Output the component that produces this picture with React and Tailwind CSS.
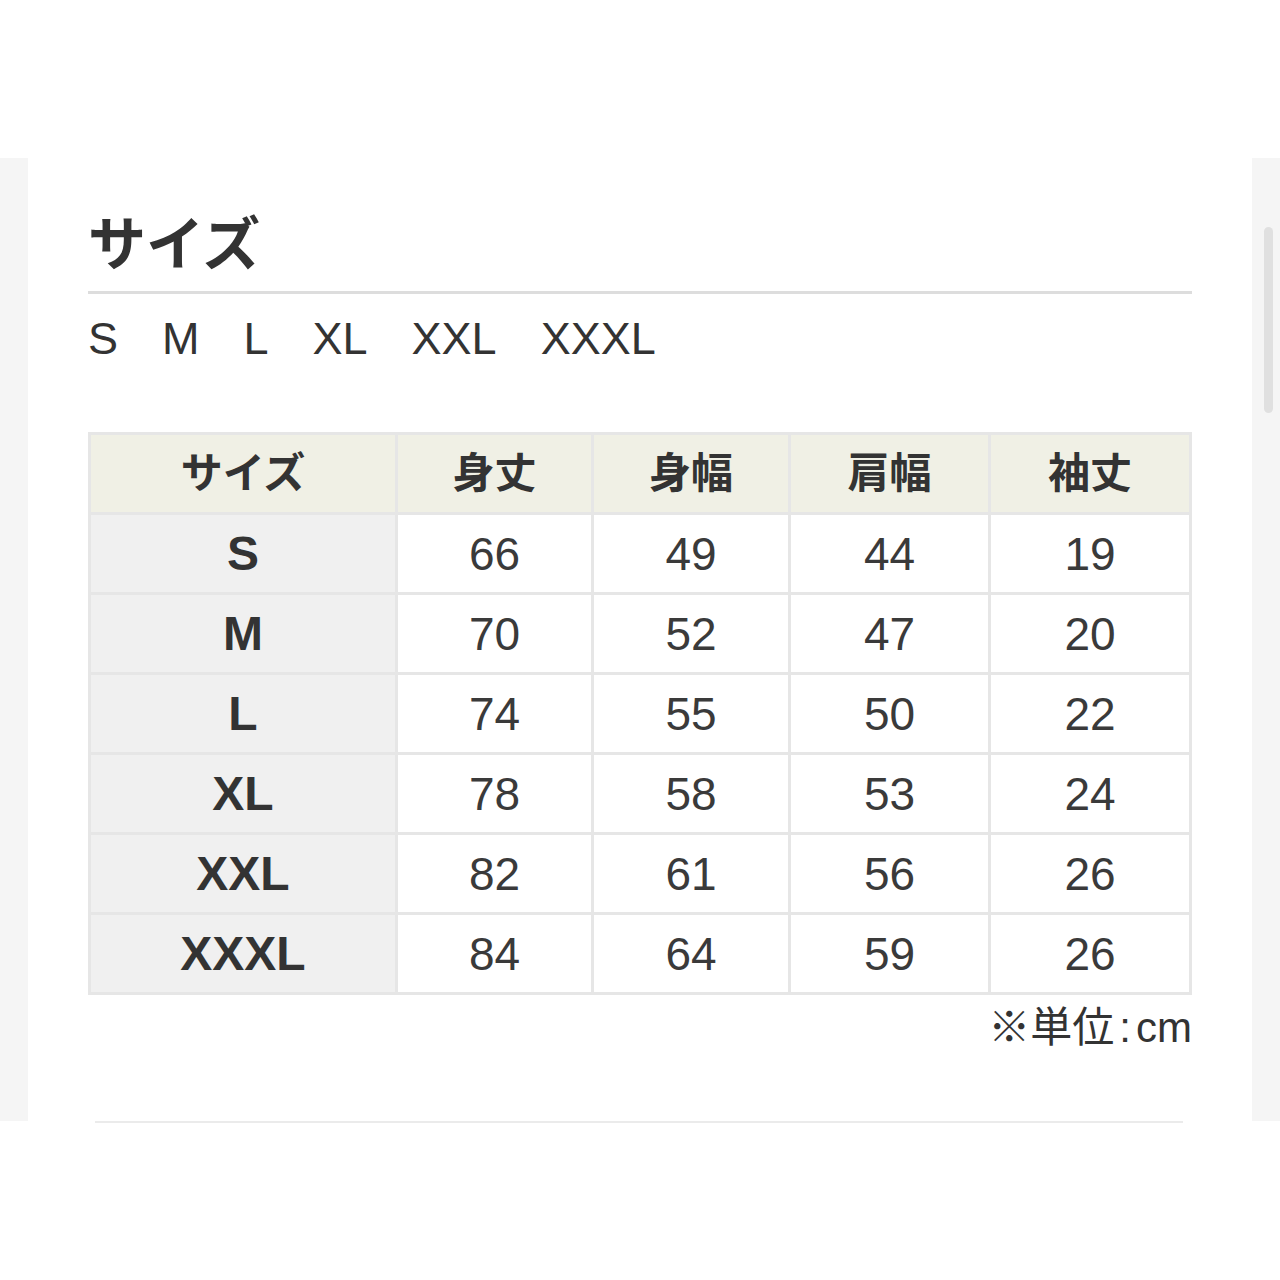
const sizes = ["S", "M", "L", "XL", "XXL", "XXXL"];

const headers = ["サイズ", "身丈", "身幅", "肩幅", "袖丈"];

const rows = [
    ["S", "66", "49", "44", "19"],
    ["M", "70", "52", "47", "20"],
    ["L", "74", "55", "50", "22"],
    ["XL", "78", "58", "53", "24"],
    ["XXL", "82", "61", "56", "26"],
    ["XXXL", "84", "64", "59", "26"],
];

function SizeTable() {
    return (
        <div className="grid grid-cols-[304px_193px_194px_197px_198px] auto-rows-[77px] gap-[3px] p-[3px] bg-[#e6e6e6]">
            {headers.map((h) => (
                <div key={h} className="flex items-center justify-center bg-[#f0f0e5] text-[42px] font-bold leading-none">
                    {h}
                </div>
            ))}
            {rows.map((row) =>
                row.map((cell, i) => (
                    <div
                        key={row[0] + i}
                        className={
                            i === 0
                                ? "flex items-center justify-center bg-[#f0f0f0] text-[48px] font-bold leading-none"
                                : "flex items-center justify-center bg-white text-[46px] text-[#3a3a3a] leading-none"
                        }
                    >
                        {cell}
                    </div>
                ))
            )}
        </div>
    );
}

export default function App() {
    return (
        <div className="min-h-screen bg-white pt-[158px] text-[#333333] font-['Liberation_Sans','Noto_Sans_CJK_JP',sans-serif]">
            <div className="flex">
                <div className="w-[28px] bg-[#f5f5f5]" />

                <div className="flex-1 px-[60px] pt-[58px] pb-[72px]">
                    <h2 className="pb-[17px] border-b-[3px] border-[#dddddd] text-[58px] font-bold leading-none">
                        サイズ
                    </h2>

                    <div className="mt-[22px] flex gap-[44px] text-[45px] leading-none">
                        {sizes.map((s) => (
                            <span key={s}>{s}</span>
                        ))}
                    </div>

                    <div className="mt-[71px]">
                        <SizeTable />
                    </div>

                    <p className="mt-[12px] text-right text-[42px] leading-none">
                        ※単位<span className="mx-[5px]">:</span>cm
                    </p>
                </div>

                <div className="w-[28px] bg-[#f5f5f5] pt-[69px] pl-[12px]">
                    <div className="w-[9px] h-[186px] rounded-full bg-[#e0e0e0]" />
                </div>
            </div>
            <div className="ml-[95px] w-[1088px] h-[2px] bg-[#ebebeb]" />
        </div>
    );
}
